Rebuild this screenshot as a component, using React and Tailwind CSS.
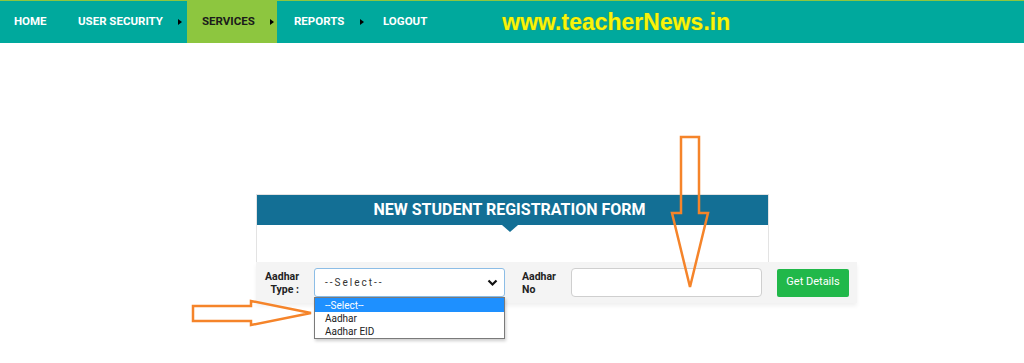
import React from "react";

const Tri = () => (
  <span className="inline-block w-0 h-0 border-y-[3.5px] border-y-transparent border-l-[4px] border-l-black" />
);

export default function App() {
  return (
    <div className="relative w-[1024px] h-[363px] bg-white overflow-hidden" style={{ fontFamily: "Roboto, 'Liberation Sans', sans-serif" }}>
      {/* NAV */}
      <div className="h-[43px] bg-[#00a99d] border-t border-t-[#8dc63f] flex items-stretch text-[11.5px] font-bold text-white">
        <div className="w-[64px] pl-[14px] flex items-center">HOME</div>
        <div className="w-[123px] pl-[14px] pr-[5px] flex items-center justify-between">
          <span>USER SECURITY</span>
          <Tri />
        </div>
        <div className="w-[90px] pl-[15px] pr-[3px] flex items-center justify-between bg-[#8dc63f] text-[#1b1b1b] -mt-px">
          <span>SERVICES</span>
          <Tri />
        </div>
        <div className="w-[90px] pl-[17px] pr-[3px] flex items-center justify-between">
          <span>REPORTS</span>
          <Tri />
        </div>
        <div className="pl-[16px] flex items-center">LOGOUT</div>
        <div
          className="ml-[75px] flex items-center text-[23px] font-bold text-[#f8f50c]"
          style={{ fontFamily: "'Liberation Sans', Arial, sans-serif", textShadow: "0 0 1px #8a8a00" }}
        >
          www.teacherNews.in
        </div>
      </div>

      {/* FORM PANEL */}
      <div className="ml-[256px] mt-[151px] w-[513px] border border-[#e3e3e3] border-b-0">
        <div className="relative h-[30px] bg-[#136f95] flex items-center justify-center text-white font-bold text-[16px]">
          <span className="-ml-[6px]">NEW STUDENT REGISTRATION FORM</span>
          <span className="absolute left-[245px] top-[30px] w-0 h-0 border-x-[8px] border-x-transparent border-t-[7px] border-t-[#136f95]" />
        </div>
        <div className="h-[37px]" />
        <div className="relative -ml-px w-[601px] h-[41px] bg-[#f4f4f4] flex items-center shadow-[0_3px_4px_rgba(0,0,0,0.06)]">
          <div className="w-[43px] text-right text-[10.5px] font-bold leading-[13px] text-[#222]">
            Aadhar
            <br />
            Type :
          </div>
          <div className="relative ml-[15px] w-[191px] h-[29px] bg-white border border-[#8cbde6] rounded-[3px] flex items-center justify-between pl-[10px] pr-[6px]">
            <span className="text-[10px] tracking-[2px] text-[#333]">--Select--</span>
            <svg width="11" height="8" viewBox="0 0 11 8">
              <path d="M1.5 1.5 L5.5 5.5 L9.5 1.5" fill="none" stroke="#111" strokeWidth="2.2" />
            </svg>
            <div className="absolute left-[-1px] top-[28px] w-[191px] h-[42px] bg-white border border-[#7a7a7a] shadow-[1px_2px_3px_rgba(0,0,0,0.2)] text-[10px] leading-[13px] text-[#222] z-10">
              <div className="h-[14px] bg-[#1e90ff] text-white pl-[10px] flex items-center">--Select--</div>
              <div className="h-[13px] pl-[10px] flex items-center">Aadhar</div>
              <div className="h-[13px] pl-[10px] flex items-center">Aadhar EID</div>
            </div>
          </div>
          <div className="ml-[17px] w-[49px] text-[10.5px] font-bold leading-[13px] text-[#222]">
            Aadhar
            <br />
            No
          </div>
          <div className="w-[191px] h-[29px] bg-white border border-[#cfcfcf] rounded-[4px]" />
          <button className="ml-[15px] w-[72px] h-[28px] bg-[#21b84a] rounded-[2px] text-white text-[11px] flex items-center justify-center">
            Get Details
          </button>
        </div>
      </div>

      {/* ARROWS */}
      <svg className="absolute inset-0 pointer-events-none z-20" width="1024" height="363">
        <polygon
          points="681,137 699,137 699,213 708,213 690,287 672,213 681,213"
          fill="none"
          stroke="#f5842a"
          strokeWidth="2.5"
          strokeLinejoin="miter"
        />
        <polygon
          points="193,306 251,306 251,301 311,313 251,325 251,321 193,321"
          fill="none"
          stroke="#f5842a"
          strokeWidth="2.5"
          strokeLinejoin="miter"
        />
      </svg>
    </div>
  );
}
